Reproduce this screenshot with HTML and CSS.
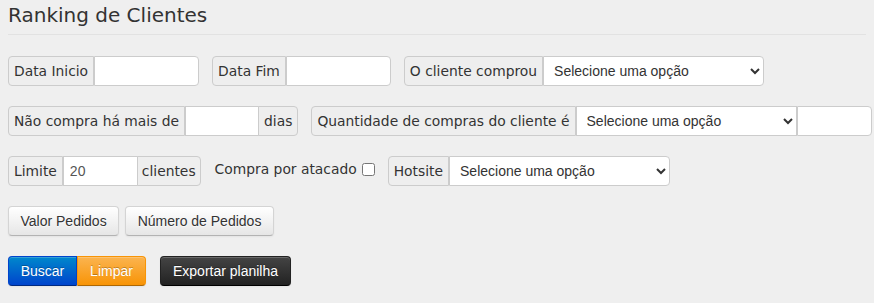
FILE: index.html
```html
<!DOCTYPE html>
<html lang="pt-BR">
<head>
<meta charset="utf-8">
<title>Ranking de Clientes</title>
<link rel="stylesheet" href="styles.css">
</head>
<body>
<div class="page">
  <h1 class="title">Ranking de Clientes</h1>
  <form class="filters">
    <div class="row">
      <div class="group">
        <span class="addon">Data Inicio</span>
        <input class="field w104" type="text">
      </div>
      <div class="group">
        <span class="addon">Data Fim</span>
        <input class="field w104" type="text">
      </div>
      <div class="group">
        <span class="addon">O cliente comprou</span>
        <select class="choice"><option>Selecione uma opção</option></select>
      </div>
    </div>
    <div class="row">
      <div class="group">
        <span class="addon">Não compra há mais de</span>
        <input class="field w73" type="text">
        <span class="addon">dias</span>
      </div>
      <div class="group">
        <span class="addon">Quantidade de compras do cliente é</span>
        <select class="choice"><option>Selecione uma opção</option></select>
        <input class="field w74" type="text">
      </div>
    </div>
    <div class="row">
      <div class="group">
        <span class="addon">Limite</span>
        <input class="field w74" type="text" value="20">
        <span class="addon tight">clientes</span>
      </div>
      <label class="check">Compra por atacado <input type="checkbox" class="box"></label>
      <div class="group">
        <span class="addon">Hotsite</span>
        <select class="choice"><option>Selecione uma opção</option></select>
      </div>
    </div>
    <div class="row tabs">
      <button type="button" class="btn">Valor Pedidos</button>
      <button type="button" class="btn">Número de Pedidos</button>
    </div>
    <div class="row actions">
      <div class="btn-group">
        <button type="button" class="btn btn-primary">Buscar</button>
        <button type="button" class="btn btn-warning">Limpar</button>
      </div>
      <button type="button" class="btn btn-inverse">Exportar planilha</button>
    </div>
  </form>
</div>
</body>
</html>
```

FILE: styles.css
```css
html, body {
  margin: 0;
  padding: 0;
  background: #efefef;
}

.page {
  padding: 0 8px;
  font-family: "DejaVu Sans", Verdana, sans-serif;
  color: #333;
}

.title {
  margin: 0;
  padding-top: 2px;
  height: 32px;
  font-size: 20px;
  font-weight: normal;
  line-height: 26px;
  color: #333;
  border-bottom: 1px solid #e2e2e2;
}

.filters {
  padding-top: 21px;
}

.row {
  display: flex;
  align-items: center;
  gap: 13px;
  margin-bottom: 20px;
}

.group {
  display: flex;
  height: 30px;
}

.addon {
  display: flex;
  align-items: center;
  box-sizing: border-box;
  height: 30px;
  padding: 0 5px;
  background: #eeeeee;
  border: 1px solid #cccccc;
  font-size: 13.85px;
  color: #333;
  white-space: nowrap;
}

.addon.tight {
  padding: 0 4px;
}

.group > * + * {
  margin-left: -1px;
}

.group > :first-child {
  border-radius: 4px 0 0 4px;
}

.group > :last-child {
  border-radius: 0 4px 4px 0;
}

.field {
  box-sizing: border-box;
  height: 30px;
  margin: 0;
  padding: 0 6px;
  border: 1px solid #cccccc;
  background: #fff;
  font-family: "Liberation Sans", Arial, sans-serif;
  font-size: 14px;
  color: #555;
  outline: none;
}

.w104 { width: 105px; }
.w73 { width: 74px; }
.w74 { width: 75px; }

.choice {
  box-sizing: border-box;
  width: 221px;
  height: 30px;
  margin: 0;
  padding: 0 4px 0 6px;
  border: 1px solid #cccccc;
  border-radius: 0;
  background: #fff;
  font-family: "Liberation Sans", Arial, sans-serif;
  font-size: 14px;
  color: #333;
  outline: none;
}

.check {
  display: flex;
  align-items: center;
  gap: 5px;
  margin-left: 1px;
  margin-top: -4px;
  font-size: 13.85px;
  color: #333;
}

.box {
  margin: 0;
  width: 13px;
  height: 13px;
}

.tabs {
  gap: 6px;
  margin-top: 1px;
}

.actions {
  gap: 14px;
}

.btn-group {
  display: flex;
}

.btn {
  box-sizing: border-box;
  height: 30px;
  margin: 0;
  padding: 0 11.5px;
  font-family: "Liberation Sans", Arial, sans-serif;
  font-size: 14px;
  color: #333;
  white-space: nowrap;
  text-shadow: 0 1px 1px rgba(255,255,255,0.75);
  background: linear-gradient(#ffffff, #e6e6e6);
  border: 1px solid #d4d4d4;
  border-bottom-color: #b3b3b3;
  border-radius: 4px;
  box-shadow: inset 0 1px 0 rgba(255,255,255,0.2), 0 1px 2px rgba(0,0,0,0.05);
}

.btn-primary {
  width: 69px;
  color: #fff;
  text-shadow: 0 -1px 0 rgba(0,0,0,0.25);
  background: linear-gradient(#0088cc, #0044cc);
  border-color: #0044cc #0044cc #002a80;
  border-radius: 4px 0 0 4px;
}

.btn-warning {
  width: 69px;
  color: #fff;
  text-shadow: 0 -1px 0 rgba(0,0,0,0.25);
  background: linear-gradient(#fbb450, #f89406);
  border-color: #f89406 #f89406 #ad6704;
  border-radius: 0 4px 4px 0;
}

.btn-inverse {
  width: 131px;
  padding: 0 8px;
  color: #fff;
  text-shadow: 0 -1px 0 rgba(0,0,0,0.25);
  background: linear-gradient(#444444, #222222);
  border-color: #222222 #222222 #000000;
}
```
